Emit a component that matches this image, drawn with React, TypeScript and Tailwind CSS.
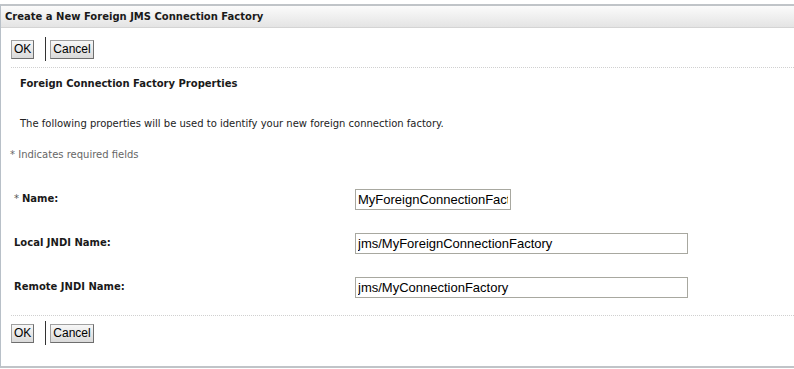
const label = "font-['DejaVu_Sans',sans-serif] text-[10px] leading-[14px] font-bold text-[#1a1a1a]";
const btn =
  "h-[19px] px-[2px] border border-[#a0a0a0] border-r-[#6e6e6e] border-b-[#6e6e6e] bg-gradient-to-b from-[#f7f7f7] to-[#dadada] font-['Liberation_Sans',sans-serif] text-[12px] text-black leading-none";

function ButtonBar() {
  return (
    <div className="flex items-center h-[26px] pl-[10px]">
      <button type="button" className={btn}>
        OK
      </button>
      <div className="w-px h-[24px] bg-[#333] ml-[11px] mr-[4px]" />
      <button type="button" className={btn}>
        Cancel
      </button>
    </div>
  );
}

function Field({ label: text, value, required, width }: { label: string; value: string; required?: boolean; width: string }) {
  return (
    <div className="flex items-center h-[44px]">
      <div className={`w-[354px] pl-[13px] ${label}`}>
        {required && <span className="font-normal text-[#555] mr-[3px]">*</span>}
        {text}
      </div>
      <input
        readOnly
        value={value}
        className={`${width} h-[21px] border border-[#a8a8a0] px-[2px] font-['Liberation_Sans',sans-serif] text-[13px] text-black outline-none`}
      />
    </div>
  );
}

export default function App() {
  return (
    <div className="w-[794px] h-[369px] bg-white pt-[4px]">
      <div className="h-[364px] border-l border-t-2 border-b-2 border-l-[#b8c0c8] border-t-[#c0c4c8] border-b-[#c0c4c8] flex flex-col">
        <div className="h-[22px] flex items-center pl-[4px] border-b border-[#d4d4d4] bg-gradient-to-b from-[#fbfbfb] to-[#e4e4e4]">
          <span className={label}>Create a New Foreign JMS Connection Factory</span>
        </div>
        <div className="pt-[8px]">
          <ButtonBar />
        </div>
        <div className="mt-[5px] ml-[10px] border-t border-dotted border-[#d0d0d0]" />
        <div className={`pl-[19px] pt-[9px] ${label}`}>Foreign Connection Factory Properties</div>
        <div className="pl-[19px] pt-[26px] font-['DejaVu_Sans',sans-serif] text-[10px] leading-[14px] text-[#222]">
          The following properties will be used to identify your new foreign connection factory.
        </div>
        <div className="pl-[9px] pt-[17px] font-['DejaVu_Sans',sans-serif] text-[10px] leading-[14px] text-[#666]">
          * Indicates required fields
        </div>
        <div className="pt-[15px]">
          <Field label="Name:" value="MyForeignConnectionFactory" required width="w-[156px]" />
          <Field label="Local JNDI Name:" value="jms/MyForeignConnectionFactory" width="w-[333px]" />
          <Field label="Remote JNDI Name:" value="jms/MyConnectionFactory" width="w-[333px]" />
        </div>
        <div className="mt-[6px] ml-[10px] border-t border-dotted border-[#d0d0d0]" />
        <div className="pt-[4px]">
          <ButtonBar />
        </div>
      </div>
    </div>
  );
}
